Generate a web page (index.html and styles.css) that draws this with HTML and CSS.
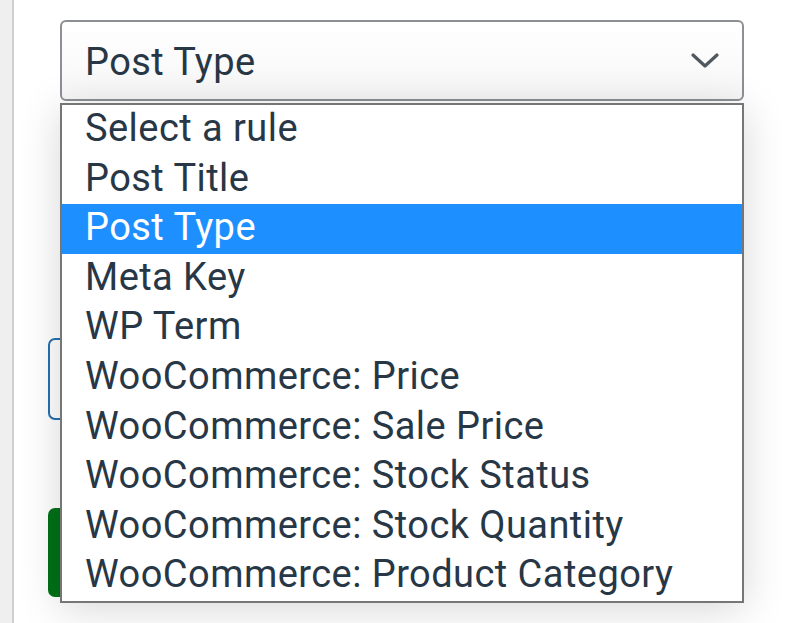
FILE: index.html
```html
<!DOCTYPE html>
<html>
<head>
<meta charset="utf-8">
<link rel="stylesheet" href="styles.css">
</head>
<body>
<div class="page">
  <div class="sidebar"></div>
  <div class="main">
    <div class="select-wrap">
      <div class="select">
        <span class="select-value">Post Type</span>
        <svg class="chevron" width="30" height="18" viewBox="0 0 30 18"><path d="M3 3 L15 14 L27 3" fill="none" stroke="#50575e" stroke-width="3.2" stroke-linecap="round" stroke-linejoin="round"/></svg>
      </div>
      <ul class="dropdown">
        <li class="option">Select a rule</li>
        <li class="option">Post Title</li>
        <li class="option selected">Post Type</li>
        <li class="option">Meta Key</li>
        <li class="option">WP Term</li>
        <li class="option">WooCommerce: Price</li>
        <li class="option">WooCommerce: Sale Price</li>
        <li class="option">WooCommerce: Stock Status</li>
        <li class="option">WooCommerce: Stock Quantity</li>
        <li class="option">WooCommerce: Product Category</li>
      </ul>
    </div>
    <div class="input-box"></div>
    <div class="green-button"></div>
  </div>
</div>
</body>
</html>
```
FILE: styles.css
```css
html, body {
  margin: 0;
  padding: 0;
  background: #ffffff;
  font-family: Roboto, "Liberation Sans", sans-serif;
}
.page {
  display: flex;
  width: 803px;
  height: 623px;
  overflow: hidden;
}
.sidebar {
  width: 12px;
  background: #efefef;
  border-right: 2px solid #cfcfcf;
  flex: none;
}
.main {
  flex: 1;
  display: flex;
  flex-direction: column;
  padding-left: 34px;
}
.select-wrap {
  position: relative;
  margin-left: 12px;
  margin-top: 20px;
  width: 684px;
  z-index: 2;
}
.select {
  box-sizing: border-box;
  height: 81px;
  border: 2px solid #8c8f94;
  border-radius: 6px;
  background: linear-gradient(#ffffff, #f7f7f7);
  display: flex;
  align-items: center;
  justify-content: space-between;
  padding: 0 22px 0 23px;
}
.select-value {
  font-size: 38px;
  line-height: 44px;
  letter-spacing: 0.4px;
  color: #283746;
  margin-top: 2px;
}
.chevron {
  display: block;
}
.dropdown {
  position: absolute;
  left: 0;
  top: 83px;
  width: 684px;
  box-sizing: border-box;
  margin: 0;
  padding: 0;
  list-style: none;
  background: #ffffff;
  border: 2px solid #767676;
  box-shadow: 0 6px 40px rgba(0, 0, 0, 0.16);
}
.option {
  height: 49.6px;
  line-height: 47px;
  padding-left: 23px;
  font-size: 38px;
  letter-spacing: 0.45px;
  color: #283746;
  white-space: nowrap;
}
.option.selected {
  background: #1e8fff;
  color: #ffffff;
}
.input-box {
  margin-top: 237px;
  width: 120px;
  height: 82px;
  box-sizing: border-box;
  border: 2px solid #2271b1;
  border-radius: 7px;
}
.green-button {
  margin-top: 88px;
  width: 120px;
  height: 89px;
  background: #007017;
  border-radius: 7px;
}
```
